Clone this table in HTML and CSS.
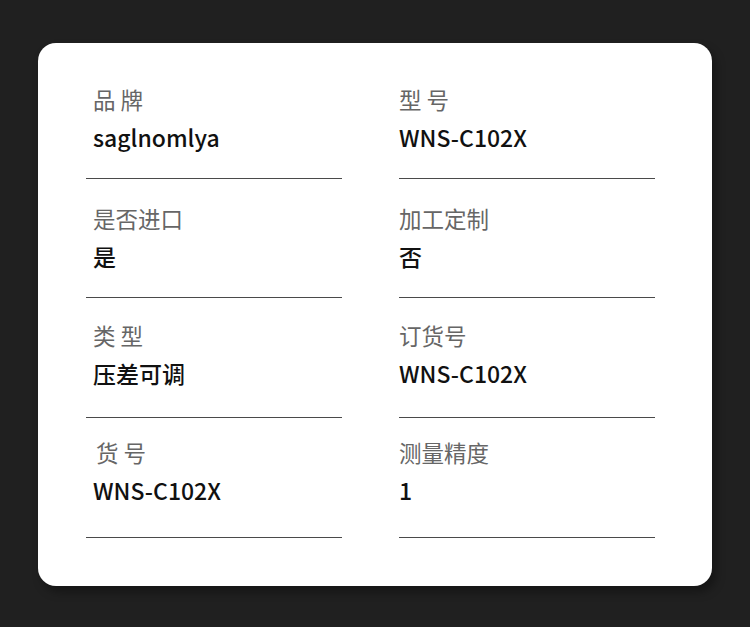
FILE: index.html
```html
<!DOCTYPE html>
<html lang="zh">
<head>
<meta charset="utf-8">
<link rel="stylesheet" href="styles.css">
</head>
<body>
<div class="card">
  <div class="grid">
    <div class="item row1"><div class="label">品 牌</div><div class="value">saglnomlya</div></div>
    <div class="item row1"><div class="label">型 号</div><div class="value">WNS-C102X</div></div>
    <div class="item row2"><div class="label">是否进口</div><div class="value">是</div></div>
    <div class="item row2"><div class="label">加工定制</div><div class="value">否</div></div>
    <div class="item row3"><div class="label">类 型</div><div class="value">压差可调</div></div>
    <div class="item row3"><div class="label">订货号</div><div class="value">WNS-C102X</div></div>
    <div class="item row4"><div class="label indent">货 号</div><div class="value">WNS-C102X</div></div>
    <div class="item row4"><div class="label">测量精度</div><div class="value">1</div></div>
  </div>
</div>
</body>
</html>
```
FILE: styles.css
```css
html, body {
  margin: 0;
  padding: 0;
  background: #202020;
  width: 750px;
  height: 627px;
  overflow: hidden;
}
body {
  font-family: "Noto Sans CJK SC", "Noto Sans", sans-serif;
  padding-top: 43px;
  padding-left: 38px;
  box-sizing: border-box;
}
.card {
  width: 674px;
  height: 543px;
  background: #fff;
  border-radius: 18px;
  box-shadow: 4px 6px 10px rgba(0,0,0,0.35);
  box-sizing: border-box;
  padding: 0 57px 0 48px;
}
.grid {
  display: grid;
  grid-template-columns: 256px 256px;
  column-gap: 57px;
}
.item {
  border-bottom: 1.5px solid #4a4a4a;
  padding-left: 7px;
  box-sizing: border-box;
}
.item:nth-child(even) {
  padding-left: 0;
}
.row1 { height: 135.5px; padding-top: 39px; }
.row2 { height: 119.5px; padding-top: 22px; }
.row3 { height: 120px; padding-top: 20px; }
.row4 { height: 120px; padding-top: 17px; }
.label {
  font-size: 22.5px;
  line-height: 34px;
  color: #666;
  white-space: pre;
}
.label.indent {
  padding-left: 3px;
}
.value {
  font-size: 23px;
  line-height: 42px;
  color: #111;
  font-weight: 500;
}
```
